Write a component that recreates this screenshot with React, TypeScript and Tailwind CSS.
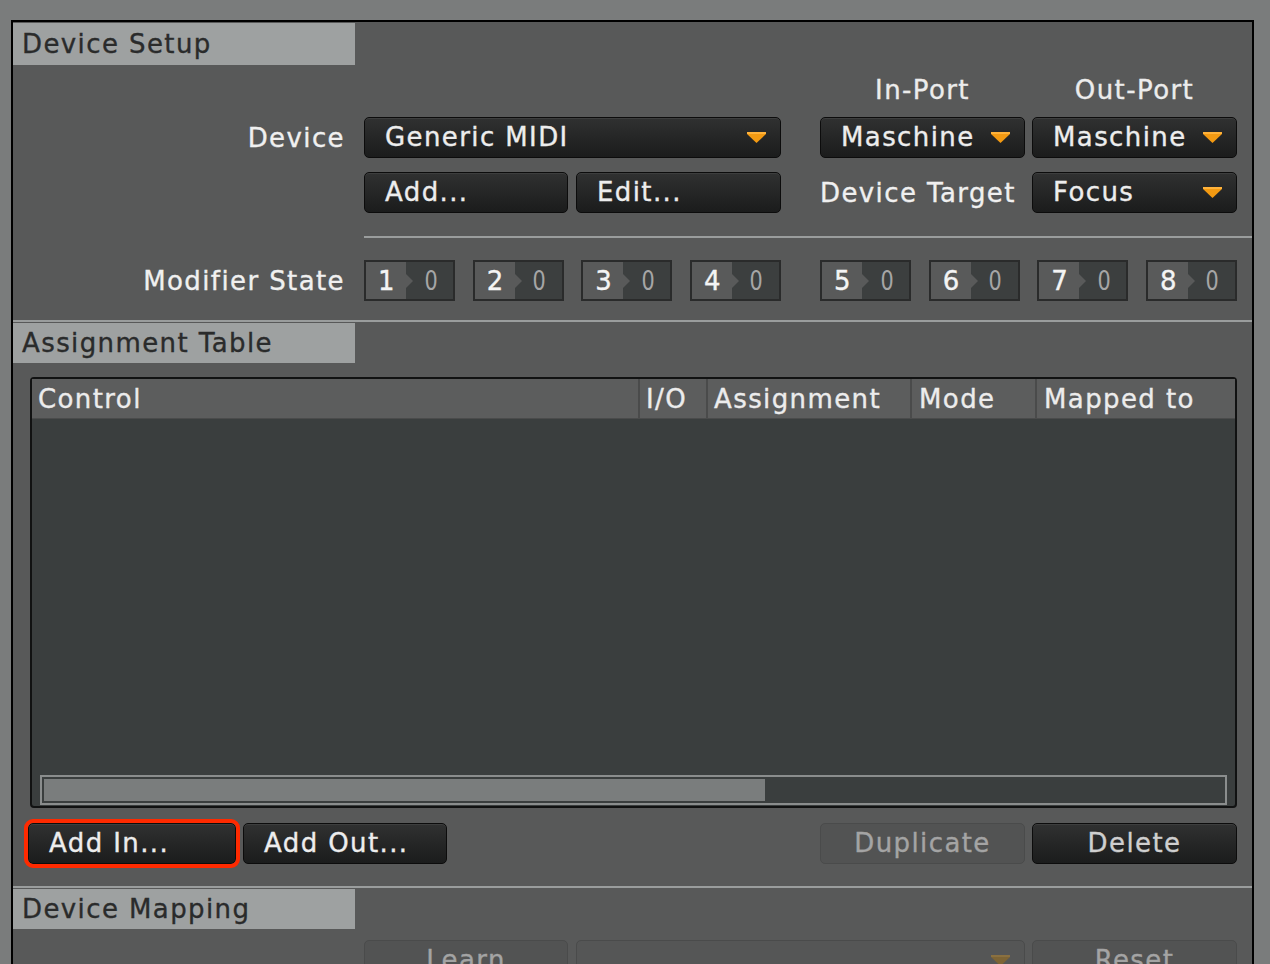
import React from "react";

function Arrow({ dim = false }: { dim?: boolean }) {
  return (
    <svg width="19" height="11" viewBox="0 0 19 11" className="shrink-0">
      <polygon points="0,0 19,0 19,2 9.5,11 0,2" fill={dim ? "#7d6435" : "#f39a12"} />
      <rect x="0" y="0" width="19" height="2" fill={dim ? "#8a7040" : "#ffb23a"} />
    </svg>
  );
}

function Dropdown({ label, w, dim = false }: { label: string; w: string; dim?: boolean }) {
  return (
    <div
      className={`flex items-center justify-between h-[41px] rounded-[5px] border pl-[20px] pr-[14px] ${w} ${
        dim
          ? "border-[#4a4b4b] bg-[#555656] text-[#a0a0a0]"
          : "border-[#0c0c0c] bg-linear-to-b from-[#303131] to-[#1b1c1c] text-[#ededed] shadow-[inset_0_1px_0_#3d3e3e]"
      }`}
    >
      <span className="whitespace-nowrap leading-normal">{label}</span>
      <Arrow dim={dim} />
    </div>
  );
}

function Btn({
  label,
  w,
  center = false,
  disabled = false,
  extra = "",
}: {
  label: string;
  w: string;
  center?: boolean;
  disabled?: boolean;
  extra?: string;
}) {
  return (
    <div
      className={`flex items-center h-[41px] rounded-[5px] border ${w} ${center ? "justify-center" : "pl-[20px]"} ${
        disabled
          ? "border-[#4a4b4b] bg-[#525353] text-[#a4a4a4]"
          : "border-[#0c0c0c] bg-linear-to-b from-[#303131] to-[#1b1c1c] text-[#ededed] shadow-[inset_0_1px_0_#3d3e3e]"
      } ${extra}`}
    >
      <span className="whitespace-nowrap leading-normal">{label}</span>
    </div>
  );
}

function ModBox({ n }: { n: number }) {
  return (
    <div className="flex h-[41px] w-[91px] border-2 border-[#2a2b2b]">
      <div className="relative flex w-[40px] items-center justify-center bg-[#595a5a] text-[#f4f4f4]">
        <span className="pl-[2px]">{n}</span>
        <svg width="7" height="14" viewBox="0 0 7 14" className="absolute left-[40px] top-[12px]">
          <polygon points="0,0 7,7 0,14" fill="#595a5a" />
        </svg>
      </div>
      <div className="flex flex-1 items-center justify-center bg-[#3c3f3f] text-[#a6a6a6]">
        <span className="pl-[4px] scale-x-[0.8] [-webkit-text-stroke:0px]">0</span>
      </div>
    </div>
  );
}

function Tab({ label, h }: { label: string; h: string }) {
  return (
    <div className={`flex items-center w-[342px] ${h} bg-[#9ea1a1] pl-[9px] text-[#2a2b2b]`}>{label}</div>
  );
}

function Sep({ className = "" }: { className?: string }) {
  return <div className={`h-[2px] bg-[#9a9d9d] ${className}`} />;
}

export default function App() {
  return (
    <div className="w-[1270px] h-[964px] overflow-hidden bg-[#7a7c7c] pt-[20px] pl-[11px] pr-[16px] font-['DejaVu_Sans',sans-serif] text-[26px] leading-none tracking-[1.4px] [-webkit-text-stroke:0.35px]">
      <div className="h-[960px] border-t-2 border-l-2 border-r-2 border-black bg-[#585959]">
        {/* Device Setup */}
        <div className="mt-[1px]">
          <Tab label="Device Setup" h="h-[42px]" />
        </div>

        <div className="mt-[10px] flex h-[30px] items-center">
          <div className="w-[807px]" />
          <div className="w-[205px] text-center text-[#ececec]">In-Port</div>
          <div className="w-[7px]" />
          <div className="w-[205px] text-center text-[#ececec]">Out-Port</div>
        </div>

        <div className="mt-[12px] flex items-center">
          <div className="w-[332px] text-right text-[#f0f0f0]">Device</div>
          <div className="ml-[19px] flex">
            <Dropdown label="Generic MIDI" w="w-[417px]" />
            <div className="w-[39px]" />
            <Dropdown label="Maschine" w="w-[205px]" />
            <div className="w-[7px]" />
            <Dropdown label="Maschine" w="w-[205px]" />
          </div>
        </div>

        <div className="mt-[14px] flex items-center">
          <div className="w-[332px]" />
          <div className="ml-[19px] flex items-center">
            <Btn label="Add..." w="w-[204px]" />
            <div className="w-[8px]" />
            <Btn label="Edit..." w="w-[205px]" />
            <div className="w-[39px]" />
            <div className="w-[212px] text-[#f0f0f0] whitespace-nowrap">Device Target</div>
            <Dropdown label="Focus" w="w-[205px]" />
          </div>
        </div>

        <Sep className="mt-[23px] ml-[351px]" />

        <div className="mt-[22px] flex items-center">
          <div className="w-[332px] text-right text-[#f0f0f0] whitespace-nowrap">Modifier State</div>
          <div className="ml-[19px] flex">
            <div className="flex w-[417px] justify-between">
              <ModBox n={1} />
              <ModBox n={2} />
              <ModBox n={3} />
              <ModBox n={4} />
            </div>
            <div className="w-[39px]" />
            <div className="flex w-[417px] justify-between">
              <ModBox n={5} />
              <ModBox n={6} />
              <ModBox n={7} />
              <ModBox n={8} />
            </div>
          </div>
        </div>

        <Sep className="mt-[19px]" />

        {/* Assignment Table */}
        <div className="mt-[1px]">
          <Tab label="Assignment Table" h="h-[40px]" />
        </div>

        <div className="ml-[17px] mt-[14px] flex h-[431px] w-[1207px] flex-col rounded-[4px] border-2 border-[#111212] bg-[#3a3e3e]">
          <div className="flex h-[40px] shrink-0 bg-[#5c5d5d] text-[#ececec] border-b border-[#4a4b4b]">
            <div className="flex w-[608px] items-center pl-[6px] border-r-2 border-[#4a4b4b]">Control</div>
            <div className="flex w-[68px] items-center pl-[6px] border-r-2 border-[#4a4b4b]">I/O</div>
            <div className="flex w-[204px] items-center pl-[6px] border-r-2 border-[#4a4b4b]">Assignment</div>
            <div className="flex w-[125px] items-center pl-[7px] border-r-2 border-[#4a4b4b]">Mode</div>
            <div className="flex flex-1 items-center pl-[7px]">Mapped to</div>
          </div>
          <div className="flex-1" />
          <div className="mx-[8px] mb-[1px] h-[30px] border-2 border-[#8a8d8d] bg-[#3a3e3e] p-[2px]">
            <div className="h-full w-[721px] bg-[#7a7d7d]" />
          </div>
        </div>

        <div className="mt-[15px] flex items-center">
          <div className="w-[15px]" />
          <Btn label="Add In..." w="w-[208px]" extra="outline-[4px] outline-solid outline-[#ff2a00]" />
          <div className="w-[7px]" />
          <Btn label="Add Out..." w="w-[204px]" />
          <div className="w-[373px]" />
          <Btn label="Duplicate" w="w-[205px]" center disabled />
          <div className="w-[7px]" />
          <Btn label="Delete" w="w-[205px]" center extra="!text-[#cfcfcf]" />
        </div>

        <Sep className="mt-[22px]" />

        {/* Device Mapping */}
        <div className="mt-[1px]">
          <Tab label="Device Mapping" h="h-[40px]" />
        </div>

        <div className="mt-[11px] flex items-center">
          <div className="w-[351px]" />
          <Btn label="Learn" w="w-[204px]" center disabled />
          <div className="w-[8px]" />
          <Dropdown label="" w="w-[449px]" dim />
          <div className="w-[7px]" />
          <Btn label="Reset" w="w-[205px]" center disabled />
        </div>
      </div>
    </div>
  );
}
